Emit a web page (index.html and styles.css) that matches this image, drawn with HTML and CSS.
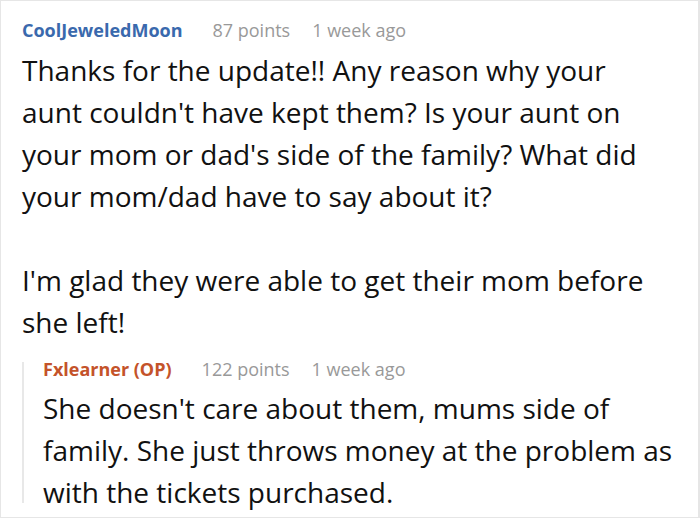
FILE: index.html
```html
<!DOCTYPE html>
<html>
<head>
<meta charset="utf-8">
<link rel="stylesheet" href="styles.css">
</head>
<body>
<div class="frame">
  <div class="comment">
    <div class="meta">
      <span class="user blue">CoolJeweledMoon</span>
      <span class="points">87 points</span>
      <span class="time">1 week ago</span>
    </div>
    <div class="body">
      <p>Thanks for the update!! Any reason why your<br>aunt couldn't have kept them? Is your aunt on<br>your mom or dad's side of the family? What did<br>your mom/dad have to say about it?</p>
      <p>I'm glad they were able to get their mom before<br>she left!</p>
    </div>
    <div class="reply">
      <div class="meta">
        <span class="user orange">Fxlearner (OP)</span>
        <span class="points">122 points</span>
        <span class="time">1 week ago</span>
      </div>
      <div class="body">
        <p>She doesn't care about them, mums side of<br>family. She just throws money at the problem as<br>with the tickets purchased.</p>
      </div>
    </div>
  </div>
</div>
</body>
</html>
```
FILE: styles.css
```css
html, body {
  margin: 0;
  padding: 0;
  background: #ffffff;
}
.frame {
  box-sizing: border-box;
  width: 700px;
  height: 518px;
  border: 1px solid #e6e6e6;
  border-right-width: 2px;
  overflow: hidden;
  font-family: "Open Sans", "Noto Sans", sans-serif;
  color: #111111;
}
.comment {
  padding: 17px 0 0 21px;
}
.meta {
  display: flex;
  align-items: center;
  height: 24px;
  font-size: 18px;
  line-height: 24px;
  white-space: nowrap;
}
.user {
  font-weight: 700;
}
.blue { color: #3a69ad; }
.orange { color: #c4532a; }
.points {
  color: #999999;
  margin-left: 30px;
}
.time {
  color: #999999;
  margin-left: 22px;
}
.body {
  margin-top: 7px;
  font-size: 28px;
  line-height: 42px;
  white-space: nowrap;
}
.body p {
  margin: 0 0 42px 0;
}
.body p:last-child {
  margin-bottom: 0;
}
.reply {
  position: relative;
  margin-top: 14px;
  padding-left: 21px;
}
.reply::before {
  content: "";
  position: absolute;
  left: 0;
  top: 5px;
  bottom: 10px;
  width: 2px;
  background: #e8e8e8;
}
.reply .body {
  margin-top: 6px;
}
```
